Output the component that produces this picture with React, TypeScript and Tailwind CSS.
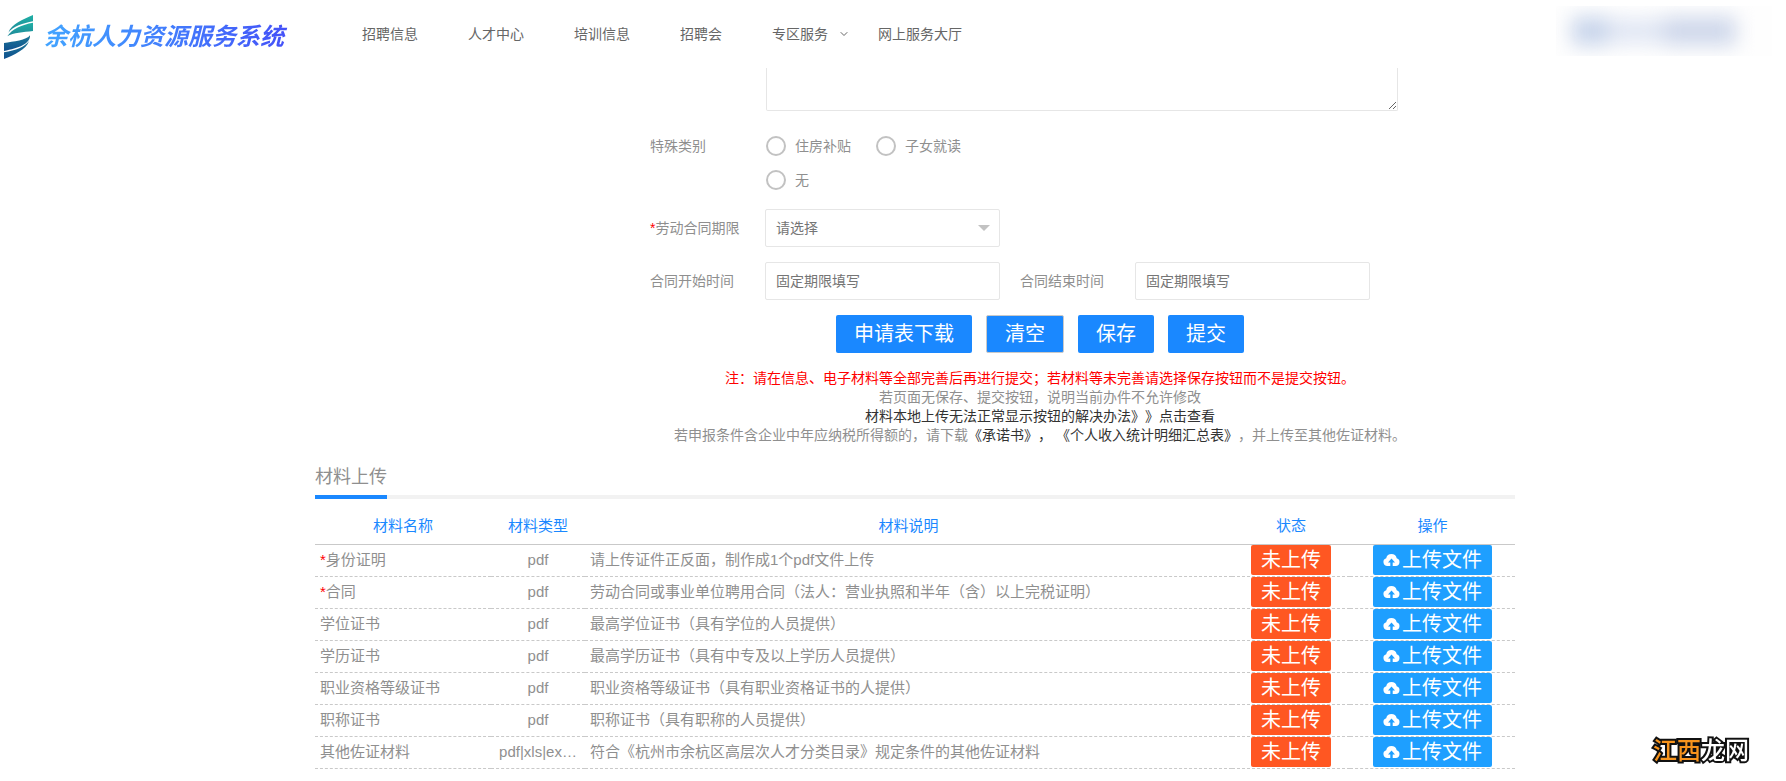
import { ChevronDown } from "lucide-react";

const navItems = [
  { text: "招聘信息" },
  { text: "人才中心" },
  { text: "培训信息" },
  { text: "招聘会" },
  { text: "专区服务", menu: true },
  { text: "网上服务大厅" },
];

const materials = [
  { name: "身份证明", required: true, type: "pdf", note: "请上传证件正反面，制作成1个pdf文件上传" },
  { name: "合同", required: true, type: "pdf", note: "劳动合同或事业单位聘用合同（法人：营业执照和半年（含）以上完税证明）" },
  { name: "学位证书", type: "pdf", note: "最高学位证书（具有学位的人员提供）" },
  { name: "学历证书", type: "pdf", note: "最高学历证书（具有中专及以上学历人员提供）" },
  { name: "职业资格等级证书", type: "pdf", note: "职业资格等级证书（具有职业资格证书的人提供）" },
  { name: "职称证书", type: "pdf", note: "职称证书（具有职称的人员提供）" },
  { name: "其他佐证材料", type: "pdf|xls|ex…", note: "符合《杭州市余杭区高层次人才分类目录》规定条件的其他佐证材料" },
];

function Logo() {
  return (
    <svg viewBox="12 45 87 132" className="h-11 w-[29px] shrink-0" aria-hidden="true">
      <defs>
        <linearGradient id="teal" x1="0" y1="0" x2="0" y2="1">
          <stop offset="0" stopColor="#1fb0a5" />
          <stop offset="1" stopColor="#1f8799" />
        </linearGradient>
        <linearGradient id="navy" x1="0" y1="0" x2="0" y2="1">
          <stop offset="0" stopColor="#1b7896" />
          <stop offset="1" stopColor="#10508f" />
        </linearGradient>
      </defs>
      <path fill="url(#teal)" d="M99 45C72 57 34 72 25 98C38 80 70 69 99 64Z" />
      <path fill="url(#teal)" d="M99 68C66 74 36 86 22 109C40 97 70 97 99 93Z" />
      <path fill="url(#navy)" d="M12 129C40 125 80 121 90 106C92 131 55 145 12 153Z" />
      <path fill="url(#navy)" d="M12 157C48 150 74 142 87 123C80 147 42 165 12 177Z" />
    </svg>
  );
}

function UploadIcon() {
  return (
    <svg viewBox="0 0 17 14" className="h-3.5 w-[17px]" aria-hidden="true">
      <path
        fill="currentColor"
        d="M4.3 13A4 4 0 0 1 3.2 5.2A5.4 5.4 0 0 1 13.7 5.2A4 4 0 0 1 12.8 13H9.7V9.6H12L8.5 5.4L5 9.6H7.3V13Z"
      />
    </svg>
  );
}

function Header() {
  return (
    <header className="relative flex h-[68px] items-center bg-white pl-1">
      <a href="#home" className="flex items-center gap-[11px] pt-1.5">
        <Logo />
        <span className="bg-linear-to-r from-[#42a4ff] to-[#4450f8] bg-clip-text pr-1 text-2xl font-bold whitespace-nowrap text-transparent italic">
          余杭人力资源服务系统
        </span>
      </a>
      <nav className="ml-[74px] flex gap-[50px] text-sm whitespace-nowrap text-[#666]">
        {navItems.map((item) => (
          <a key={item.text} href="#nav" className="relative">
            {item.text}
            {item.menu && <ChevronDown className="absolute top-1 -right-[22px] size-3" />}
          </a>
        ))}
      </nav>
      <div className="absolute top-1.5 right-3.5 h-[50px] w-[216px] overflow-hidden bg-[#fefefe]" aria-hidden="true">
        <div className="flex h-full items-center pl-4 blur-[10px]">
          <div className="h-7 w-9 bg-[#c6d3ea]" />
          <div className="h-6 w-14 bg-[#dfe5f3]" />
          <div className="h-7 w-18 bg-[#cdd6ea]" />
        </div>
      </div>
    </header>
  );
}

const field =
  "h-[38px] w-[235px] rounded-xs border border-[#e6e6e6] bg-white px-2.5 text-sm text-[#757575] placeholder:text-[#757575] outline-none";
const radio = "size-5 appearance-none rounded-full border-2 border-[#c2c2c2] checked:bg-[#c2c2c2]";
const action = "h-[38px] rounded-xs bg-[#1a88ff] px-[18px] text-xl text-white";

function ApplicationForm() {
  return (
    <form className="ml-[335px] w-[780px] text-sm text-[#8f8f8f]" onSubmit={(e) => e.preventDefault()}>
      <textarea
        aria-label="备注"
        className="ml-[116px] block h-[43px] w-[632px] resize rounded-b-xs border border-t-0 border-[#e6e6e6] outline-none"
      />
      <fieldset className="mt-[25px] flex">
        <legend className="float-left w-[116px] leading-5">特殊类别</legend>
        <div className="flex flex-col gap-3.5 leading-5">
          <div className="flex gap-[25px]">
            <label className="flex items-center gap-[9px]">
              <input type="radio" name="category" className={radio} />
              住房补贴
            </label>
            <label className="flex items-center gap-[9px]">
              <input type="radio" name="category" className={radio} />
              子女就读
            </label>
          </div>
          <label className="flex items-center gap-[9px]">
            <input type="radio" name="category" className={radio} />无
          </label>
        </div>
      </fieldset>
      <div className="mt-[19px] flex items-center">
        <label htmlFor="term" className="w-[115px]">
          <span className="text-[#f00]">*</span>劳动合同期限
        </label>
        <div className="relative">
          <select id="term" className={`${field} appearance-none`}>
            <option>请选择</option>
          </select>
          <span className="pointer-events-none absolute top-4 right-2.5 border-x-6 border-t-6 border-x-transparent border-t-[#c2c2c2]" />
        </div>
      </div>
      <div className="mt-[15px] flex items-center">
        <label htmlFor="start" className="w-[115px]">合同开始时间</label>
        <input id="start" placeholder="固定期限填写" className={field} />
        <label htmlFor="end" className="ml-5 w-[115px]">合同结束时间</label>
        <input id="end" placeholder="固定期限填写" className={field} />
      </div>
      <div className="mt-[15px] flex justify-center gap-3.5">
        <button type="button" className={action}>申请表下载</button>
        <button type="reset" className={`${action} border border-[#c9c9c9]`}>清空</button>
        <button type="button" className={action}>保存</button>
        <button type="submit" className={action}>提交</button>
      </div>
      <div className="mt-4 text-center leading-[19px] whitespace-nowrap [text-spacing-trim:space-all]">
        <p className="text-[#f00]">注：请在信息、电子材料等全部完善后再进行提交；若材料等未完善请选择保存按钮而不是提交按钮。</p>
        <p>若页面无保存、提交按钮，说明当前办件不允许修改</p>
        <p><a href="#help" className="text-[#333]">材料本地上传无法正常显示按钮的解决办法》》点击查看</a></p>
        <p>
          若申报条件含企业中年应纳税所得额的，请下载
          <a href="#promise" className="text-[#333]">《承诺书》，</a>{" "}
          <a href="#income" className="text-[#333]">《个人收入统计明细汇总表》</a>
          ，并上传至其他佐证材料。
        </p>
      </div>
    </form>
  );
}

function Materials() {
  return (
    <section className="mt-4">
      <div className="flex border-b-4 border-[#f2f2f2]">
        <h2 className="-mb-1 border-b-4 border-[#1a88ff] pb-0.5 text-lg leading-8 text-[#8f8f8f]">材料上传</h2>
      </div>
      <table className="mt-[9px] w-full table-fixed border-collapse text-[15px] text-[#8f8f8f]">
        <colgroup>
          <col className="w-[176px]" />
          <col className="w-[94px]" />
          <col />
          <col className="w-[118px]" />
          <col className="w-[165px]" />
        </colgroup>
        <thead>
          <tr className="h-9 border-b border-[#c9c9c9] text-[#1a88ff]">
            <th className="font-normal">材料名称</th>
            <th className="font-normal">材料类型</th>
            <th className="font-normal">材料说明</th>
            <th className="font-normal">状态</th>
            <th className="font-normal">操作</th>
          </tr>
        </thead>
        <tbody>
          {materials.map((m) => (
            <tr key={m.name} className="h-8 border-b border-dashed border-[#c9c9c9] whitespace-nowrap">
              <td className="p-0 pl-[5px]">
                {m.required && <span className="text-[#f00]">*</span>}
                {m.name}
              </td>
              <td className="p-0 text-center">{m.type}</td>
              <td className="p-0 pl-[5px]">{m.note}</td>
              <td className="p-0">
                <span className="mx-auto block h-[30px] w-20 rounded-xs bg-[#ff5722] text-center text-xl leading-[30px] text-white">
                  未上传
                </span>
              </td>
              <td className="p-0">
                <button
                  type="button"
                  className="mx-auto flex h-[30px] items-center gap-0.5 rounded-xs bg-[#1e9fff] px-2.5 text-xl leading-[30px] text-white"
                >
                  <UploadIcon />
                  上传文件
                </button>
              </td>
            </tr>
          ))}
        </tbody>
      </table>
    </section>
  );
}

export default function App() {
  return (
    <div className="min-h-screen bg-white font-['Liberation_Sans','Noto_Sans_CJK_SC',sans-serif]">
      <Header />
      <main className="pl-11">
        <div className="mx-auto max-w-[1200px]">
          <ApplicationForm />
          <Materials />
        </div>
      </main>
      <div className="fixed right-[37px] bottom-3.5 text-2xl font-medium text-white [-webkit-text-stroke:4px_#111] [paint-order:stroke_fill]">
        <span className="text-[#f7941d]">江西</span>龙网
      </div>
    </div>
  );
}
